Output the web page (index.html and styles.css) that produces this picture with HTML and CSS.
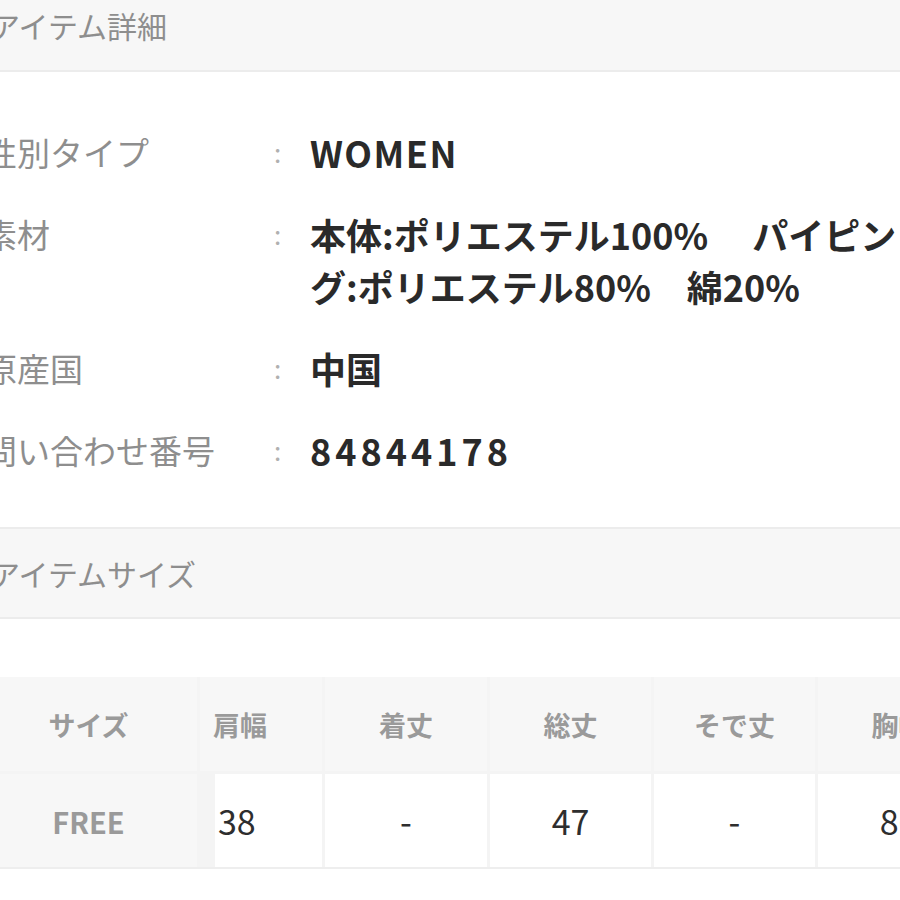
FILE: index.html
```html
<!DOCTYPE html>
<html lang="ja">
<head>
<meta charset="utf-8">
<title>アイテム詳細</title>
<link rel="stylesheet" href="styles.css">
</head>
<body>
<div class="page">
  <section class="section">
    <h2 class="band band-first">アイテム詳細</h2>
    <dl class="details">
      <div class="row">
        <dt class="label">性別タイプ</dt>
        <dd class="colon">:</dd>
        <dd class="value latin">WOMEN</dd>
      </div>
      <div class="row">
        <dt class="label">素材</dt>
        <dd class="colon">:</dd>
        <dd class="value"><span class="line">本体:ポリエステル100%　 パイピン</span><span class="line">グ:ポリエステル80%　綿20%</span></dd>
      </div>
      <div class="row">
        <dt class="label">原産国</dt>
        <dd class="colon">:</dd>
        <dd class="value">中国</dd>
      </div>
      <div class="row">
        <dt class="label">問い合わせ番号</dt>
        <dd class="colon">:</dd>
        <dd class="value num">84844178</dd>
      </div>
    </dl>
  </section>
  <section class="section">
    <h2 class="band">アイテムサイズ</h2>
    <div class="size-table">
      <div class="th first">サイズ</div>
      <div class="th left">肩幅</div>
      <div class="th">着丈</div>
      <div class="th">総丈</div>
      <div class="th">そで丈</div>
      <div class="th">胸幅</div>
      <div class="td first">FREE</div>
      <div class="td left inset">38</div>
      <div class="td">-</div>
      <div class="td">47</div>
      <div class="td">-</div>
      <div class="td">86</div>
    </div>
  </section>
</div>
</body>
</html>
```
FILE: styles.css
```css
html, body {
  margin: 0;
  padding: 0;
  background: #ffffff;
  overflow: hidden;
}
body {
  width: 900px;
  height: 900px;
  font-family: "Noto Sans CJK JP", "Noto Sans", sans-serif;
}
.page {
  width: 960px;
  margin: -20px 0 0 -20px;
}
.band {
  margin: 0;
  height: 92px;
  box-sizing: border-box;
  background: #f7f7f7;
  border-top: 2px solid #ececec;
  border-bottom: 2px solid #ececec;
  display: flex;
  align-items: center;
  padding-left: 10px;
  font-size: 30px;
  font-weight: 400;
  color: #8e8e8e;
}
.band-first {
  border-top: none;
}
.details {
  margin: 0;
  padding: 54px 0 51px 0;
  display: flex;
  flex-direction: column;
  gap: 30px;
}
.row {
  display: grid;
  grid-template-columns: 290px 40px 1fr;
  line-height: 52px;
}
.label {
  margin: 0;
  padding-left: 4px;
  font-size: 33px;
  color: #8e8e8e;
  white-space: nowrap;
  overflow: hidden;
}
.colon {
  margin: 0;
  padding-left: 4px;
  font-size: 26px;
  color: #b0b0b0;
}
.value {
  margin: 0;
  font-size: 36px;
  font-weight: 700;
  color: #2a2a2a;
  white-space: nowrap;
}
.value .line {
  display: block;
}
.latin {
  letter-spacing: 1.5px;
}
.num {
  letter-spacing: 4px;
}
.size-table {
  margin-top: 58px;
  display: grid;
  grid-template-columns: 217px 122px 162px 161px 161px 161px;
  grid-template-rows: 94px 93px;
  column-gap: 3px;
  row-gap: 3px;
  background: #f4f4f4;
  border-bottom: 2px solid #eeeeee;
  width: max-content;
}
.th {
  background: #f7f7f7;
  display: flex;
  align-items: center;
  justify-content: center;
  font-size: 27px;
  font-weight: 700;
  color: #9a9a9a;
}
.td {
  background: #ffffff;
  display: flex;
  align-items: center;
  justify-content: center;
  font-size: 34px;
  font-weight: 400;
  color: #2e2e2e;
}
.td.first {
  background: #f7f7f7;
  font-size: 29px;
  font-weight: 700;
  color: #9a9a9a;
}
.left {
  justify-content: flex-start;
  padding-left: 13px;
}
.td.inset {
  margin-left: 15px;
  padding-left: 3px;
}
```
